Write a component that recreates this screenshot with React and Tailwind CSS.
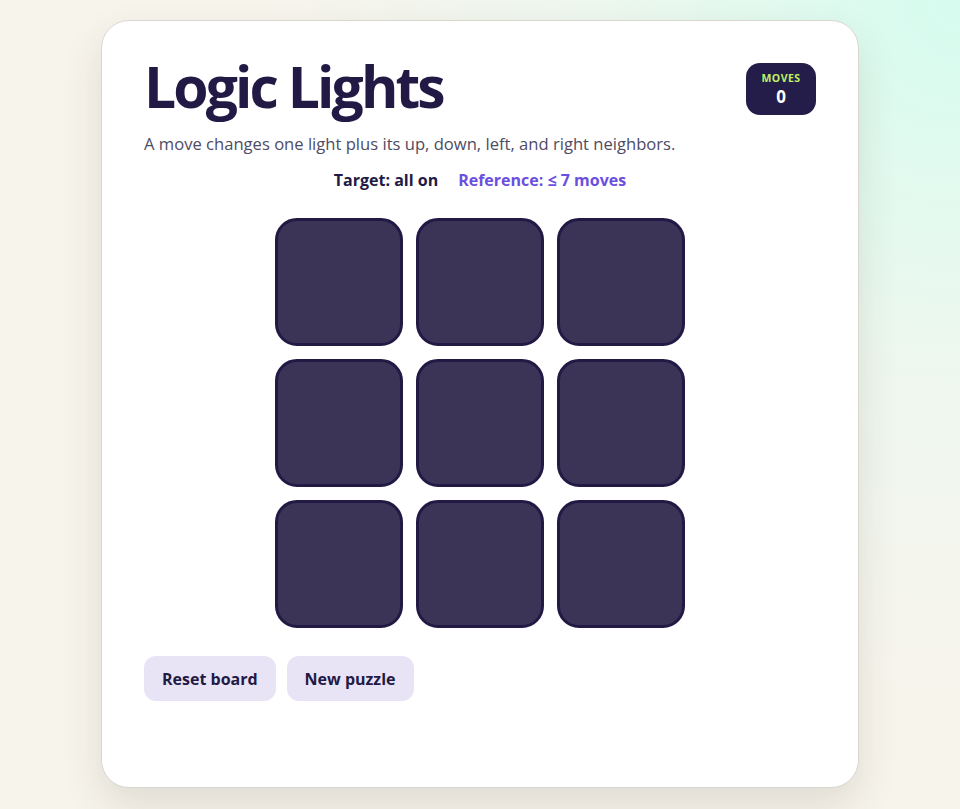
import React, { useState } from "react";

const font = { fontFamily: '"Open Sans", "Noto Sans", sans-serif' };

const Tile = ({ on, onClick }) => (
  <button
    onClick={onClick}
    className={`w-[128px] h-[128px] rounded-[22px] border-[3px] border-[#221a45] ${
      on ? "bg-[#bef264]" : "bg-[#3c3456]"
    }`}
  />
);

export default function App() {
  const [board, setBoard] = useState(Array(9).fill(false));
  const [moves, setMoves] = useState(0);

  const press = (i) => {
    const r = Math.floor(i / 3);
    const c = i % 3;
    const next = [...board];
    [[r, c], [r - 1, c], [r + 1, c], [r, c - 1], [r, c + 1]].forEach(([y, x]) => {
      if (y >= 0 && y < 3 && x >= 0 && x < 3) next[y * 3 + x] = !next[y * 3 + x];
    });
    setBoard(next);
    setMoves(moves + 1);
  };

  const reset = () => {
    setBoard(Array(9).fill(false));
    setMoves(0);
  };

  return (
    <div
      style={font}
      className="min-h-screen w-full bg-[radial-gradient(circle_at_100%_0%,#d6fcef_0%,#eef7ee_30%,#f7f4ec_55%,#f7f4ec_100%)] flex justify-center pt-[20px] pb-[21px]"
    >
      <div className="w-[758px] h-[768px] bg-white rounded-[28px] border border-[#d9d6d0] shadow-[0_18px_40px_rgba(60,50,30,0.12)] px-[42px] pt-[37px]">
        <div className="flex justify-between items-start">
          <div>
            <h1 className="text-[57px] leading-none font-bold tracking-[-2.9px] text-[#221a45]">
              Logic Lights
            </h1>
            <p className="text-[16.6px] leading-[24px] text-[#4f4b63] mt-[17px]">
              A move changes one light plus its up, down, left, and right neighbors.
            </p>
          </div>
          <div className="mt-[5px] w-[70px] h-[52px] rounded-[14px] bg-[#241d4a] flex flex-col items-center justify-center">
            <span className="text-[10.5px] font-bold tracking-[0.5px] text-[#bef264] leading-none">MOVES</span>
            <span className="text-[17px] font-bold text-white leading-none mt-[4px]">{moves}</span>
          </div>
        </div>

        <div className="flex justify-center gap-[20px] mt-[12px] text-[16px] font-bold">
          <span className="text-[#221a45]">Target: all on</span>
          <span className="text-[#6b4fe0]">Reference: ≤ 7 moves</span>
        </div>

        <div className="flex justify-center mt-[26px]">
          <div className="grid grid-cols-3 gap-[13px]">
            {board.map((on, i) => (
              <Tile key={i} on={on} onClick={() => press(i)} />
            ))}
          </div>
        </div>

        <div className="flex gap-[11px] mt-[28px]">
          <button
            onClick={reset}
            className="h-[45px] px-[18px] rounded-[12px] bg-[#e9e4f5] text-[16px] font-bold text-[#221a45]"
          >
            Reset board
          </button>
          <button
            onClick={reset}
            className="h-[45px] px-[18px] rounded-[12px] bg-[#e9e4f5] text-[16px] font-bold text-[#221a45]"
          >
            New puzzle
          </button>
        </div>
      </div>
    </div>
  );
}
